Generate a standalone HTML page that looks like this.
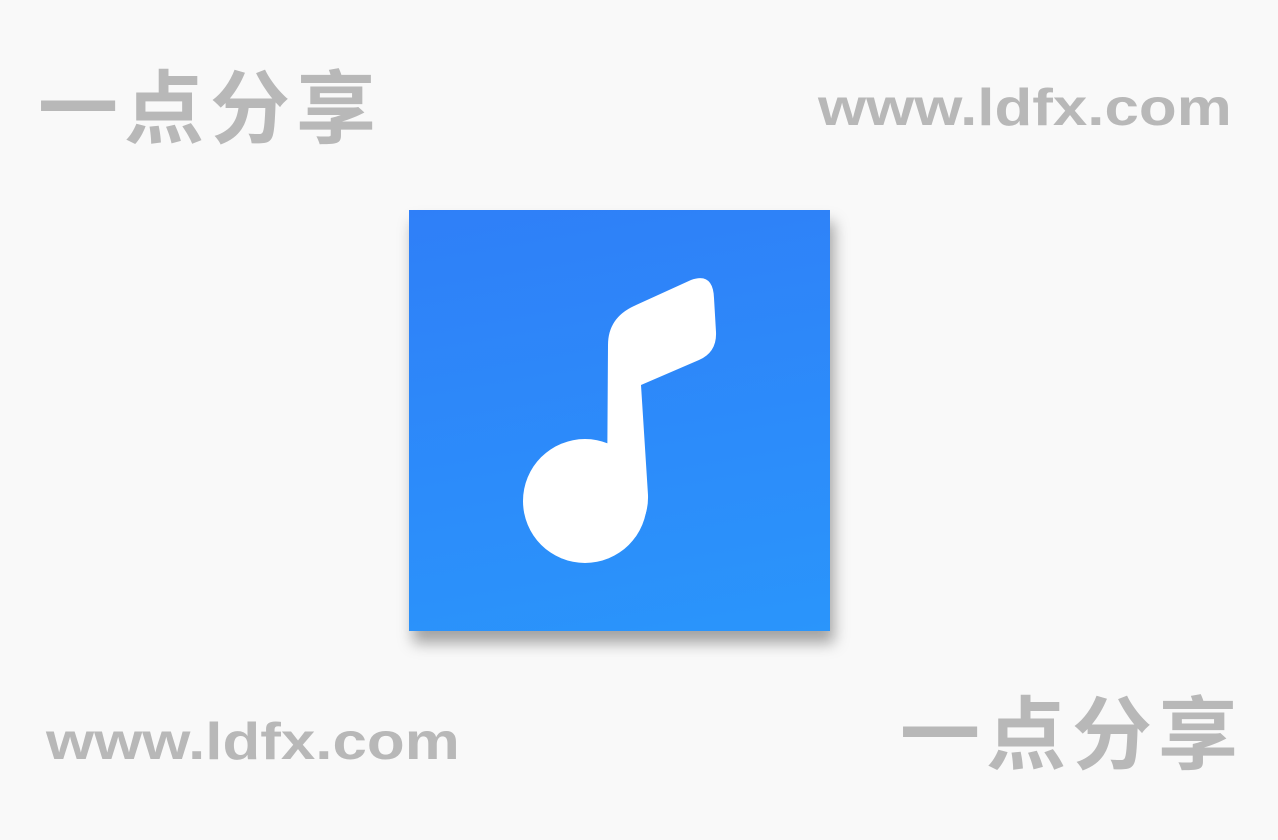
<!DOCTYPE html>
<html><head><meta charset="utf-8"><style>
body{margin:0;width:1278px;height:840px;background:#f9f9f9;position:relative;overflow:hidden}
.cn{position:absolute;font-family:"Liberation Sans","Noto Sans CJK SC",sans-serif;font-weight:bold;font-size:80px;color:#b8b8b8;line-height:1;letter-spacing:6px;white-space:nowrap}
.en{position:absolute;font-family:"Liberation Sans",sans-serif;font-weight:bold;font-size:52px;color:#b8b8b8;line-height:1;white-space:nowrap;transform-origin:0 0}
.icon{position:absolute;left:409px;top:210px;width:421px;height:421px;background:linear-gradient(170deg,#2f7ff8 0%,#2a95fb 100%);box-shadow:4px 12px 14px rgba(0,0,0,.35)}
</style></head><body>
<div class="cn" style="left:38px;top:70px">一点分享</div>
<div class="cn" style="left:900px;top:696px">一点分享</div>
<div class="en" style="left:818px;top:82px;transform:scaleX(1.19)">www.ldfx.com</div>
<div class="en" style="left:46px;top:716px;transform:scaleX(1.19)">www.ldfx.com</div>
<div class="icon">
<svg width="421" height="421" viewBox="0 0 421 421">
<circle cx="176" cy="291" r="62" fill="#fff"/>
<path d="M198,292 L199,135 Q199,108 225,96 L282,70 Q304,62 305,88 L307,122 Q308,142 290,150 L232,175 L239,285 Q240,315 215,330 L198,320 Z" fill="#fff"/>
</svg>
</div>
</body></html>
